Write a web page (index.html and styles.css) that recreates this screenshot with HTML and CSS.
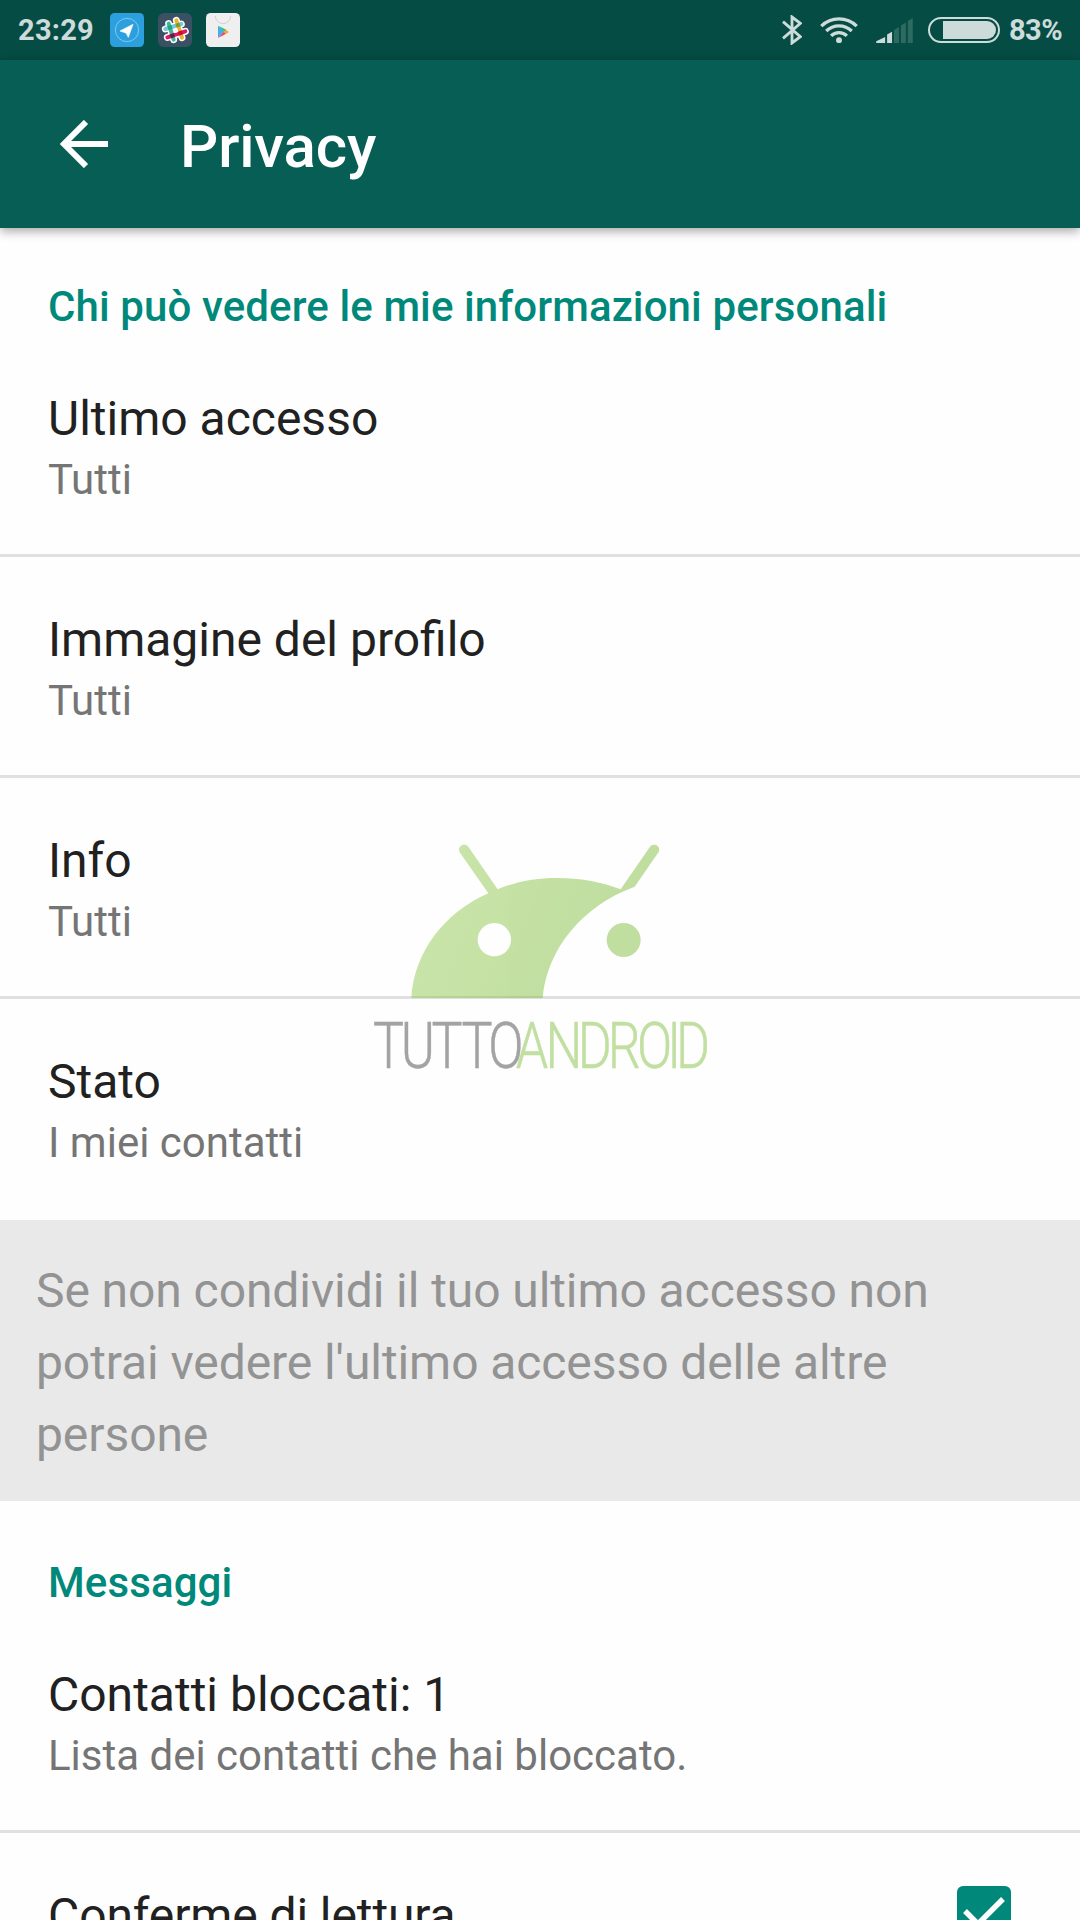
FILE: index.html
```html
<!DOCTYPE html>
<html lang="it">
<head>
<meta charset="utf-8">
<title>Privacy</title>
<link rel="stylesheet" href="styles.css">
</head>
<body>
<header class="status-bar">
  <span class="clock">23:29</span>
  <div class="notifications">
    <svg class="app-icon" viewBox="0 0 102 102">
      <rect width="102" height="102" rx="14" fill="#2ca0de"/>
      <circle cx="51" cy="51" r="35" fill="none" stroke="#8fd0f2" stroke-width="2.5"/>
      <path d="M30 54 69 34 55 73 48 60z" fill="#fff" stroke="#fff" stroke-width="2" stroke-linejoin="round"/>
    </svg>
    <svg class="app-icon" viewBox="0 0 102 102">
      <rect width="102" height="102" rx="18" fill="#3c5063"/>
      <g fill="none" stroke-linecap="round">
        <g stroke="#fff" stroke-width="21"><path d="M32 32 47 80M55 22 72 74M22 48 70 33M28 73 82 55"/></g>
        <g stroke-width="12">
          <path d="M22 48 70 33" stroke="#70cadb"/>
          <path d="M55 22 72 74" stroke="#ecb32d"/>
          <path d="M32 32 47 80" stroke="#3eb890"/>
          <path d="M28 73 82 55" stroke="#e01765"/>
        </g>
        <g stroke-width="12" stroke-linecap="butt">
          <path d="M30 45 42 42" stroke="#2b9c8c"/>
          <path d="M54 38 66 35" stroke="#7a9b3b"/>
          <path d="M37 70 49 66" stroke="#611f54"/>
          <path d="M61 62 73 58" stroke="#c7122d"/>
        </g>
      </g>
      <path d="M47 47 57 44 61 57 51 60z" fill="#fff"/>
    </svg>
    <svg class="app-icon" viewBox="0 0 102 102">
      <rect width="102" height="102" rx="14" fill="#efefef"/>
      <path d="M28 9a23 23 0 0 0 46 0" fill="none" stroke="#d2d2d2" stroke-width="3"/>
      <path d="M36 38v36l18-18z" fill="#4ea8ee"/>
      <path d="M36 38 54 57 61 50z" fill="#19cf79"/>
      <path d="M36 75 54 56 60 62z" fill="#ee3f55"/>
      <path d="M53 56 59 50 69 57 60 63z" fill="#f9a23a"/>
    </svg>
  </div>
  <div class="system">
    <svg class="bluetooth" viewBox="0 0 60 90"><path d="M3 20 55 65 30 84V6L55 25 3 70" fill="none" stroke="#cddcda" stroke-width="8.5"/></svg>
    <svg class="wifi" viewBox="0 0 116 84">
      <g fill="none" stroke="#cddcda" stroke-width="10"><path d="M4 30a77 77 0 0 1 108 0M19 45a56 56 0 0 1 78 0M34 60a34 34 0 0 1 48 0"/></g>
      <circle cx="58" cy="73" r="9" fill="#cddcda"/>
    </svg>
    <svg class="signal" viewBox="0 0 111 76">
      <path d="M0 76V71L27 58V76zM33 76V50L48 42V76z" fill="#cddcda"/>
      <path d="M54 76V37L69 27V76zM75 76V23L90 14V76zM96 76V9L111 0V76z" fill="#2e6a60"/>
    </svg>
    <svg class="battery" viewBox="0 0 216 78">
      <rect x="3" y="3" width="210" height="72" rx="36" fill="none" stroke="#cddcda" stroke-width="6"/>
      <path d="M45 12H177a27 27 0 0 1 0 54H45z" fill="#cddcda"/>
    </svg>
    <span class="percent">83%</span>
  </div>
</header>

<nav class="app-bar">
  <svg class="back" viewBox="0 0 144 144"><path d="M78 6 12 72 78 138M12 72H144" fill="none" stroke="#fff" stroke-width="18"/></svg>
  <h1 class="title">Privacy</h1>
</nav>

<main class="settings">
  <h2 class="section">Chi può vedere le mie informazioni personali</h2>
  <div class="row"><div class="label">Ultimo accesso</div><div class="value">Tutti</div></div>
  <div class="row"><div class="label">Immagine del profilo</div><div class="value">Tutti</div></div>
  <div class="row"><div class="label">Info</div><div class="value">Tutti</div></div>
  <div class="row last"><div class="label">Stato</div><div class="value">I miei contatti</div></div>
  <p class="note">Se non condividi il tuo ultimo accesso non potrai vedere l'ultimo accesso delle altre persone</p>
  <h2 class="section second">Messaggi</h2>
  <div class="row"><div class="label">Contatti bloccati: 1</div><div class="value">Lista dei contatti che hai bloccato.</div></div>
  <div class="row switch">
    <div class="label">Conferme di lettura</div>
    <svg class="checkbox" viewBox="0 0 54 54"><rect width="54" height="54" rx="6" fill="#00897b"/><path d="M8 25 21 38 46 13" fill="none" stroke="#fff" stroke-width="5.5"/></svg>
  </div>
</main>

<svg class="watermark" viewBox="0 0 360 260">
  <defs>
    <linearGradient id="leaf" gradientUnits="userSpaceOnUse" x1="200" y1="280" x2="650" y2="450">
      <stop offset="0" stop-color="#89c43f"/><stop offset="1" stop-color="#76b92f"/>
    </linearGradient>
  </defs>
  <g transform="scale(.33333)" fill="url(#leaf)" class="robot">
    <path fill-rule="evenodd" d="M154 534C162 395 255 277 385 220L300 98C289 81 312 66 325 80L413 208C470 184 529 174 590 174C658 174 724 185 782 208L869 82C880 66 904 78 896 96L824 200C665 258 560 390 548 534ZM403 309a50 50 0 1 0 .1 0z"/>
    <circle cx="791" cy="360" r="51"/>
  </g>
  <g class="brand" transform="scale(.8 1)">
    <text class="brand-grey" y="248" x="16.1 51.1 89.5 127 160.4">TUTTO</text>
    <text class="brand-green" y="248" x="194.8 231.8 272.1 309.6 346.3 384.1 395">ANDROID</text>
  </g>
</svg>
</body>
</html>
```
FILE: styles.css
```css
* { box-sizing: border-box; }
body {
  margin: 0;
  height: 1920px;
  overflow: hidden;
  position: relative;
  background: #fefefe;
  font-family: Roboto, sans-serif;
  color: #212121;
}
svg { display: block; flex: none; }

.status-bar {
  height: 60px;
  padding: 0 18px;
  display: flex;
  align-items: center;
  background: #054d44;
  color: #cddcda;
  font-size: 29px;
  font-weight: 700;
  line-height: 60px;
}
.clock { width: 92px; letter-spacing: .25px; }
.notifications { display: flex; gap: 14px; }
.app-icon { width: 34px; height: 34px; }
.system { display: flex; align-items: center; margin-left: auto; }
.bluetooth { width: 20px; height: 30px; }
.wifi { width: 38px; height: 28px; margin-left: 18px; }
.signal { width: 37px; height: 25px; margin-left: 18px; }
.battery { width: 72px; height: 26px; margin-left: 15px; }
.percent { margin-left: 9px; letter-spacing: -.6px; }

.app-bar {
  height: 168px;
  padding-left: 60px;
  display: flex;
  align-items: center;
  background: #075e54;
  color: #fff;
  box-shadow: 0 3px 10px rgba(0, 0, 0, .36);
  position: relative;
}
.back { width: 48px; height: 48px; }
.title { margin: 5px 0 0 72px; font-size: 60px; font-weight: 500; line-height: 72px; letter-spacing: -.15px; }

.settings { display: flex; flex-direction: column; height: 1692px; overflow: hidden; }
.section {
  flex: none;
  margin: 0;
  height: 108px;
  padding: 54px 48px 0;
  color: #00897b;
  font-size: 42px;
  font-weight: 500;
  line-height: 50px;
  letter-spacing: .11px;
}
.second { height: 111px; padding-top: 57px; }
.row { flex: none; height: 221px; padding: 55px 48px 0; border-bottom: 3px solid #e0e0e0; }
.last { border: 0; }
.label { font-size: 48px; line-height: 56px; }
.value { margin-top: 8px; color: #757575; font-size: 42px; line-height: 50px; }
.note {
  flex: none;
  margin: 0;
  height: 281px;
  padding: 35px 130px 0 36px;
  background: #e9e9e9;
  color: #939393;
  font-size: 48px;
  line-height: 72px;
  letter-spacing: -.08px;
}
.switch { display: flex; align-items: flex-start; justify-content: space-between; padding-right: 69px; }
.switch .label { letter-spacing: -.1px; }
.checkbox { width: 54px; height: 54px; margin-top: -2px; }

.watermark { position: absolute; left: 360px; top: 820px; width: 360px; height: 260px; }
.robot { opacity: .45; }
.brand { font-size: 65px; font-weight: 300; }
.brand-grey { fill: #a3a3a3; stroke: #a3a3a3; stroke-width: .5px; }
.brand-green { fill: #c1dfa0; stroke: #c1dfa0; stroke-width: .5px; }
```
